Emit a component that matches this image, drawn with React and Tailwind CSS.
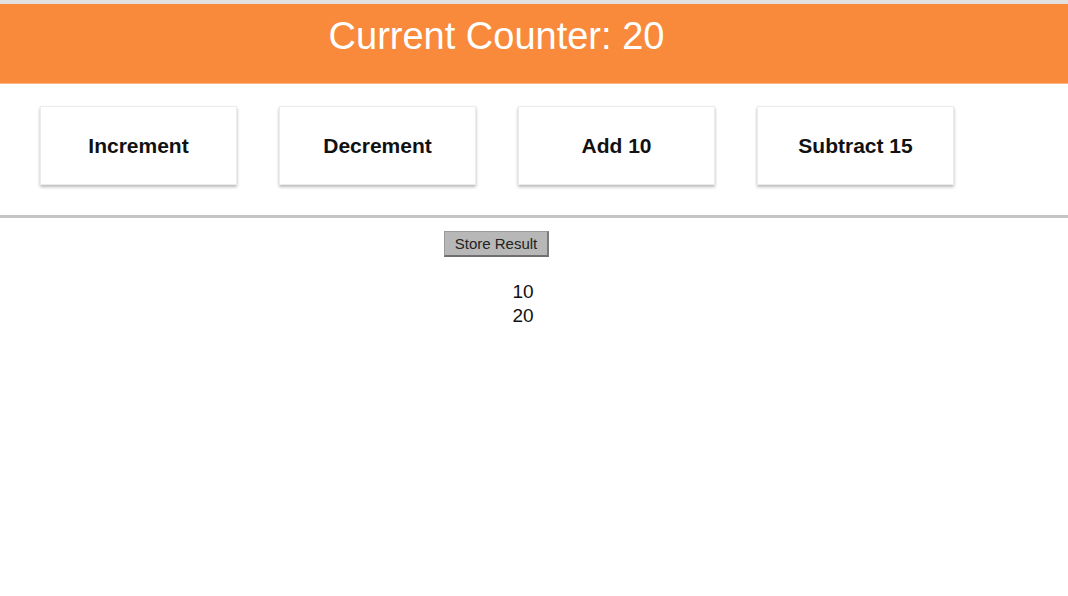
import { useState } from 'react';

const font = { fontFamily: '"Liberation Sans", Arial, sans-serif' };

function CounterControl({ label, onClick }) {
  return (
    <button
      onClick={onClick}
      className="w-[197px] h-[79px] bg-white border border-[#ececec] shadow-[0_2px_3px_rgba(0,0,0,0.28)] text-[21px] font-bold text-[#111] cursor-pointer"
    >
      {label}
    </button>
  );
}

export default function App() {
  const [counter, setCounter] = useState(20);
  const [results, setResults] = useState([10, 20]);

  return (
    <div className="min-h-screen bg-white" style={font}>
      {/* top strip */}
      <div className="h-[4px] bg-[#e3e1df]" />

      {/* header */}
      <div className="h-[80px] bg-[#f98a3b] border-b border-[#fbb88a]">
        <div className="w-[993px] pt-[10px] text-center text-white text-[38px] leading-[44px]">
          Current Counter: {counter}
        </div>
      </div>

      {/* controls */}
      <div className="w-[993px] flex gap-[42px] pl-[40px] pt-[22px]">
        <CounterControl label="Increment" onClick={() => setCounter(c => c + 1)} />
        <CounterControl label="Decrement" onClick={() => setCounter(c => c - 1)} />
        <CounterControl label="Add 10" onClick={() => setCounter(c => c + 10)} />
        <CounterControl label="Subtract 15" onClick={() => setCounter(c => c - 15)} />
      </div>

      <hr className="mt-[30px] border-0 border-t-[3px] border-[#c4c4c4]" />

      <div className="w-[993px] flex justify-center pt-[13px]">
        <button
          onClick={() => setResults(r => [...r, counter])}
          className="w-[105px] h-[26px] bg-[#b7b7b7] border border-[#9a9a9a] border-b-[2px] border-r-[2px] border-b-[#6f6f6f] border-r-[#7a7a7a] text-[15px] text-[#222] leading-none"
        >
          Store Result
        </button>
      </div>

      <ul className="w-[993px] pl-[53px] pt-[23px] text-center text-[19px] leading-[24px] text-[#111]">
        {results.map((r, i) => (
          <li key={i}>{r}</li>
        ))}
      </ul>
    </div>
  );
}
